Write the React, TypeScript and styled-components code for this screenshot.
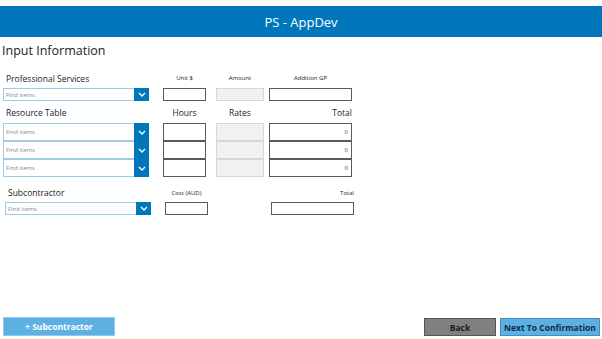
import React from "react";
import styled, { createGlobalStyle } from "styled-components";

const GlobalStyle = createGlobalStyle`
  html, body {
    margin: 0;
    padding: 0;
    background: #ffffff;
    font-family: "Open Sans", "Liberation Sans", sans-serif;
  }
`;

const Page = styled.div`
  height: 339px;
  display: flex;
  flex-direction: column;
  padding-top: 6px;
  box-sizing: border-box;
`;

const Header = styled.div`
  height: 31px;
  background: #0077bb;
  color: #ffffff;
  display: flex;
  align-items: center;
  justify-content: center;
  font-size: 13px;
`;

const PageTitle = styled.div`
  font-size: 12.5px;
  color: #222;
  padding: 5px 0 0 2px;
  height: 18px;
  line-height: 18px;
`;

const Grid = styled.div<{ $left: number }>`
  display: grid;
  grid-template-columns: 160px 53px 53px 84px;
  padding-left: ${(p) => p.$left}px;
`;

const SectionLabel = styled.div<{ $top: number; $bottom: number }>`
  font-size: 8.5px;
  color: #222;
  padding: ${(p) => p.$top}px 0 ${(p) => p.$bottom}px 3px;
  height: 14px;
  line-height: 14px;
`;

const ColLabel = styled.div<{ $top: number; $big?: boolean; $align?: string; $w: number }>`
  width: ${(p) => p.$w}px;
  font-size: ${(p) => (p.$big ? "8.5px" : "6px")};
  color: #222;
  padding-top: ${(p) => p.$top}px;
  height: 14px;
  line-height: 14px;
  text-align: ${(p) => p.$align || "center"};
`;

const Dropdown = styled.div<{ $h: number }>`
  width: 146px;
  height: ${(p) => p.$h}px;
  box-sizing: border-box;
  border: 1px solid #9ecbe6;
  display: flex;
  background: #fff;
`;

const DropText = styled.div`
  flex: 1;
  font-size: 6px;
  color: #888;
  display: flex;
  align-items: center;
  padding-left: 2px;
`;

const Chevron = styled.div`
  width: 15px;
  margin: -1px -1px -1px 0;
  background: #0077bb;
  display: flex;
  align-items: center;
  justify-content: center;
`;

const Box = styled.div<{ $w: number; $h: number; $gray?: boolean }>`
  width: ${(p) => p.$w}px;
  height: ${(p) => p.$h}px;
  box-sizing: border-box;
  border: 1px solid ${(p) => (p.$gray ? "#d6d6d6" : "#5a5a5a")};
  background: ${(p) => (p.$gray ? "#f1f1f1" : "#fff")};
  font-size: 6px;
  color: #444;
  display: flex;
  align-items: center;
  justify-content: flex-end;
  padding-right: 3px;
`;

const Footer = styled.div`
  margin-top: auto;
  display: flex;
  align-items: flex-end;
  padding: 0 2px 3px 3px;
`;

const Button = styled.button<{ $bg: string; $border: string; $color: string; $w: number; $h: number }>`
  width: ${(p) => p.$w}px;
  height: ${(p) => p.$h}px;
  background: ${(p) => p.$bg};
  border: 1px solid ${(p) => p.$border};
  color: ${(p) => p.$color};
  font-family: "Open Sans", "Liberation Sans", sans-serif;
  font-weight: 700;
  font-size: 8.5px;
  padding: 0;
`;

const Spacer = styled.div`
  flex: 1;
`;

const ButtonGap = styled.div`
  width: 4px;
`;

const ChevronIcon = () => (
  <svg width="8" height="5" viewBox="0 0 8 5">
    <path d="M1 1 L4 4 L7 1" stroke="#fff" strokeWidth="1.3" fill="none" />
  </svg>
);

const Drop = ({ h }: { h: number }) => (
  <Dropdown $h={h}>
    <DropText>Find items</DropText>
    <Chevron>
      <ChevronIcon />
    </Chevron>
  </Dropdown>
);

export default function App() {
  return (
    <>
      <GlobalStyle />
      <Page>
        <Header>PS - AppDev</Header>
        <PageTitle>Input Information</PageTitle>

        <Grid $left={3}>
          <SectionLabel $top={12} $bottom={2}>Professional Services</SectionLabel>
          <ColLabel $top={11} $w={43}>Unit $</ColLabel>
          <ColLabel $top={11} $w={48}>Amount</ColLabel>
          <ColLabel $top={11} $w={83}>Addition GP</ColLabel>

          <Drop h={13} />
          <Box $w={43} $h={13} />
          <Box $w={48} $h={13} $gray />
          <Box $w={83} $h={13} />

          <SectionLabel $top={5} $bottom={3}>Resource Table</SectionLabel>
          <ColLabel $top={5} $big $w={43}>Hours</ColLabel>
          <ColLabel $top={5} $big $w={48}>Rates</ColLabel>
          <ColLabel $top={5} $big $w={83} $align="right">Total</ColLabel>

          {[0, 1, 2].map((i) => (
            <React.Fragment key={i}>
              <Drop h={18} />
              <Box $w={43} $h={18} />
              <Box $w={48} $h={18} $gray />
              <Box $w={83} $h={18}>0</Box>
            </React.Fragment>
          ))}
        </Grid>

        <Grid $left={5}>
          <SectionLabel $top={9} $bottom={2}>Subcontractor</SectionLabel>
          <ColLabel $top={9} $w={43}>Cost (AUD)</ColLabel>
          <div />
          <ColLabel $top={9} $w={83} $align="right">Total</ColLabel>

          <Drop h={13} />
          <Box $w={43} $h={13} />
          <div />
          <Box $w={83} $h={13} />
        </Grid>

        <Footer>
          <Button $bg="#5db1e2" $border="#8fcaee" $color="#fff" $w={112} $h={19}>
            + Subcontractor
          </Button>
          <Spacer />
          <Button $bg="#808080" $border="#555" $color="#1c1c1c" $w={72} $h={18}>
            Back
          </Button>
          <ButtonGap />
          <Button $bg="#5db1e2" $border="#3f8fc4" $color="#102a4a" $w={100} $h={18}>
            Next To Confirmation
          </Button>
        </Footer>
      </Page>
    </>
  );
}
